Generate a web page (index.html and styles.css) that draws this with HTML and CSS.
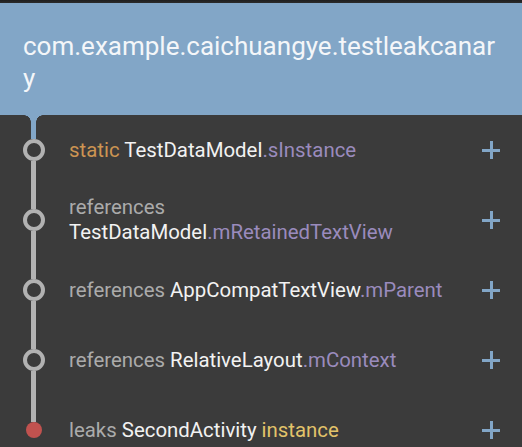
FILE: index.html
```html
<!DOCTYPE html>
<html>
<head>
<meta charset="utf-8">
<link rel="stylesheet" href="styles.css">
</head>
<body>
<div class="statusbar"></div>
<header class="header">
  <h1 class="title">com.example.caichuangye.testleakcanary</h1>
</header>
<ul class="trace">
  <li class="row first">
    <div class="rail"><span class="seg seg-top"></span><span class="node"></span><span class="seg"></span></div>
    <div class="text"><span class="kw">static</span> <span class="cls">TestDataModel</span><span class="fld">.sInstance</span></div>
    <span class="plus"></span>
  </li>
  <li class="row">
    <div class="rail"><span class="seg"></span><span class="node"></span><span class="seg"></span></div>
    <div class="text"><span class="ref">references</span><br><span class="cls">TestDataModel</span><span class="fld">.mRetainedTextView</span></div>
    <span class="plus"></span>
  </li>
  <li class="row">
    <div class="rail"><span class="seg"></span><span class="node"></span><span class="seg"></span></div>
    <div class="text"><span class="ref">references</span> <span class="cls">AppCompatTextView</span><span class="fld">.mParent</span></div>
    <span class="plus"></span>
  </li>
  <li class="row">
    <div class="rail"><span class="seg"></span><span class="node"></span><span class="seg"></span></div>
    <div class="text"><span class="ref">references</span> <span class="cls">RelativeLayout</span><span class="fld">.mContext</span></div>
    <span class="plus"></span>
  </li>
  <li class="row">
    <div class="rail"><span class="seg"></span><span class="node leak"></span><span class="seg seg-none"></span></div>
    <div class="text"><span class="ref">leaks</span> <span class="cls">SecondActivity</span> <span class="inst">instance</span></div>
    <span class="plus"></span>
  </li>
</ul>
</body>
</html>
```

FILE: styles.css
```css
* { box-sizing: border-box; }
html, body {
  margin: 0;
  padding: 0;
  background: #3b3b3b;
  font-family: Roboto, "Noto Sans", sans-serif;
  overflow: hidden;
}
.statusbar {
  height: 3px;
  background: linear-gradient(#1f1f1f, #2c2c2c);
}
.header {
  background: #82a6c7;
  height: 112px;
  padding: 27px 22px 0 23px;
}
.title {
  margin: 0;
  font-weight: 400;
  font-size: 26px;
  line-height: 32px;
  color: #f4f6f9;
  word-break: break-all;
}
.trace {
  list-style: none;
  margin: 0;
  padding: 0;
}
.row {
  display: flex;
  align-items: center;
  height: 70px;
  padding-right: 22px;
}
.rail {
  width: 67px;
  align-self: stretch;
  display: flex;
  flex-direction: column;
  align-items: center;
  position: relative;
}
.seg {
  flex: 1;
  width: 5px;
  background: #b2b2b2;
}
.seg-none { background: transparent; }
.seg-top {
  background: #82a6c7;
  position: relative;
}
.seg-top::before,
.seg-top::after {
  content: "";
  position: absolute;
  top: 0;
  width: 7px;
  height: 7px;
}
.seg-top::before {
  right: 100%;
  background: radial-gradient(circle at 0 100%, transparent 6.5px, #82a6c7 7px);
}
.seg-top::after {
  left: 100%;
  background: radial-gradient(circle at 100% 100%, transparent 6.5px, #82a6c7 7px);
}
.node {
  width: 22px;
  height: 22px;
  border-radius: 50%;
  border: 4px solid #b2b2b2;
  background: #3b3b3b;
  flex: none;
}
.node.leak {
  width: 16px;
  height: 16px;
  border: none;
  background: #c1524f;
}
.text {
  flex: 1;
  padding-left: 2px;
  font-size: 20.4px;
  line-height: 25px;
  color: #f2f2f2;
}
.kw { color: #cc9452; }
.ref { color: #ababab; }
.cls { color: #f2f2f2; }
.fld { color: #9a8bbd; }
.inst { color: #e2c36a; }
.plus {
  width: 18px;
  height: 18px;
  flex: none;
  position: relative;
}
.plus::before,
.plus::after {
  content: "";
  position: absolute;
  background: #82a6c7;
}
.plus::before {
  left: 0;
  right: 0;
  top: 8px;
  height: 2.5px;
}
.plus::after {
  top: 0;
  bottom: 0;
  left: 8px;
  width: 2.5px;
}
```
